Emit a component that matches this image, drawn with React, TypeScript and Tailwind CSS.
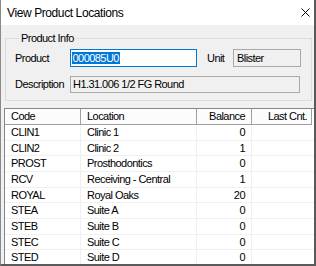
import React from "react";

const rows: [string, string, string][] = [
  ["CLIN1", "Clinic 1", "0"],
  ["CLIN2", "Clinic 2", "1"],
  ["PROST", "Prosthodontics", "0"],
  ["RCV", "Receiving - Central", "1"],
  ["ROYAL", "Royal Oaks", "20"],
  ["STEA", "Suite A", "0"],
  ["STEB", "Suite B", "0"],
  ["STEC", "Suite C", "0"],
  ["STED", "Suite D", "0"],
];

export default function App() {
  return (
    <div className="w-[316px] h-[266px] overflow-hidden bg-white flex flex-col border-l border-l-[#8a8a8a] border-r-2 border-r-[#5a5a5a] border-b-2 border-b-[#5a5a5a] text-black font-['Liberation_Sans',Arial,sans-serif] text-[11px] tracking-[-0.55px]">
      <div className="h-[25px] shrink-0 bg-white flex items-center justify-between pl-[6px] pr-[4px]">
        <span className="text-[12px] tracking-[-0.4px] leading-[14px]">View Product Locations</span>
        <svg width="9" height="9" viewBox="0 0 9 9" className="block">
          <path d="M0.5 0.5 L8.5 8.5 M8.5 0.5 L0.5 8.5" stroke="#000" strokeWidth="1" fill="none" />
        </svg>
      </div>
      <div className="flex-1 min-h-0 bg-[#f0f0f0] flex flex-col">
        <fieldset className="ml-[4px] mt-[7px] w-[307px] border border-[#dcdcdc] pl-[9px] pb-[7px] pt-0 pr-0 shrink-0">
          <legend className="ml-[4px] px-[2px] leading-[13px]">Product Info</legend>
          <div className="flex items-center mt-[4px] h-[18px]">
            <span className="w-[55px] shrink-0">Product</span>
            <div className="w-[127px] h-[18px] border border-[#0078d7] bg-white flex items-center pl-[1px] shrink-0">
              <span className="bg-[#0078d7] text-white leading-[12px] pr-[1px] pl-[0.5px]">000085U0</span>
            </div>
            <span className="ml-[10px] w-[26px] shrink-0">Unit</span>
            <div className="w-[68px] h-[18px] border border-[#a9a9a9] bg-[#f0f0f0] flex items-center pl-[3px] shrink-0">
              Blister
            </div>
          </div>
          <div className="flex items-center mt-[9px] h-[17px]">
            <span className="w-[55px] shrink-0">Description</span>
            <div className="w-[230px] h-[17px] border border-[#a9a9a9] bg-[#f0f0f0] flex items-center pl-[2px] shrink-0">
              H1.31.006 1/2 FG Round
            </div>
          </div>
        </fieldset>
        <div className="ml-[3px] mt-[7px] flex-1 min-h-0 bg-white border-l border-t border-[#828790] flex flex-col">
          <div className="flex h-[16px] shrink-0">
            <div className="w-[76px] border-r border-b border-[#a0a0a0] bg-[#fcfcfc] flex items-center pl-[6px]">Code</div>
            <div className="w-[116px] border-r border-b border-[#a0a0a0] bg-[#fcfcfc] flex items-center pl-[6px]">Location</div>
            <div className="w-[55px] border-r border-b border-[#a0a0a0] bg-[#fcfcfc] flex items-center justify-end pr-[6px]">Balance</div>
            <div className="w-[60px] border-r border-b border-[#a0a0a0] bg-[#fcfcfc] flex items-center justify-end pr-[4px]">Last Cnt.</div>
          </div>
          {rows.map(([code, loc, bal]) => (
            <div key={code} className="flex h-[15.67px] shrink-0 border-b border-[#f0f0f0]">
              <div className="w-[76px] border-r border-[#f0f0f0] flex items-center pl-[6px]">{code}</div>
              <div className="w-[116px] border-r border-[#f0f0f0] flex items-center pl-[6px]">{loc}</div>
              <div className="w-[55px] border-r border-[#f0f0f0] flex items-center justify-end pr-[6px]">{bal}</div>
              <div className="w-[60px] flex items-center"></div>
            </div>
          ))}
        </div>
      </div>
    </div>
  );
}
